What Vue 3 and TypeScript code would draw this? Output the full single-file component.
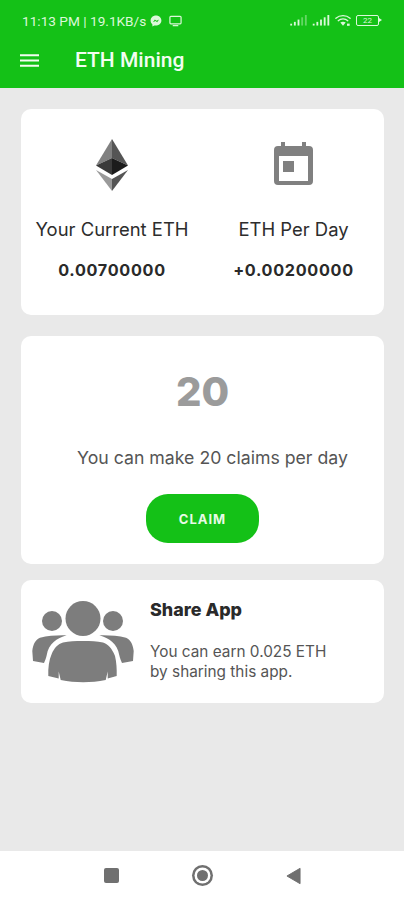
<script setup lang="ts">
interface Stat { label: string; value: string; icon: 'eth' | 'calendar' }
const stats: Stat[] = [
  { label: 'Your Current ETH', value: '0.00700000', icon: 'eth' },
  { label: 'ETH Per Day', value: '+0.00200000', icon: 'calendar' },
]
</script>

<template>
  <div class="screen">
    <header class="header">
      <div class="status">
        <div class="status-left">
          <span>11:13 PM | 19.1KB/s</span>
          <svg class="ico-msg" viewBox="0 0 12 12" width="12" height="12">
            <path fill="#dcf8da" d="M6 .5C2.900.5.600 2.700.600 5.600c0 1.600.700 2.900 1.800 3.800v2l1.900-1c.5.100 1.100.200 1.700.200 3.100 0 5.400-2.200 5.400-5S9.100.5 6 .5z" />
            <path fill="#14c117" d="M2.900 7.300l2-2.800 1.500 1.300 2.700-1.300-2 2.800-1.500-1.300z" />
          </svg>
          <svg class="ico-screen" viewBox="0 0 14 12" width="13" height="12">
            <rect x="1" y="1" width="12" height="8" rx="1" fill="none" stroke="#dcf8da" stroke-width="1.300" />
            <path d="M4 11h6" stroke="#dcf8da" stroke-width="1.300" />
          </svg>
        </div>
        <div class="status-right">
          <svg viewBox="0 0 18 12" width="17" height="11">
            <g fill="#dcf8da">
              <rect x="0" y="9.500" width="2" height="2" />
              <rect x="4" y="7.500" width="2" height="4" />
              <rect x="8" y="5" width="2" height="6.500" />
            </g>
            <g fill="#dcf8da" opacity=".4">
              <rect x="12" y="2.500" width="2" height="9" />
              <rect x="16" y="0" width="2" height="11.500" />
            </g>
          </svg>
          <svg viewBox="0 0 18 12" width="18" height="11">
            <g fill="#dcf8da">
              <rect x="0" y="9.500" width="2" height="2" />
              <rect x="4" y="7.500" width="2" height="4" />
              <rect x="8" y="5" width="2" height="6.500" />
              <rect x="12" y="2.500" width="2" height="9" />
              <rect x="16" y="0" width="2" height="11.500" />
            </g>
          </svg>
          <svg viewBox="0 0 18 14" width="16" height="13">
            <g fill="none" stroke="#dcf8da" stroke-width="1.500" stroke-linecap="round">
              <path d="M1 4.500c4.500-4 11.500-4 16 0" />
              <path d="M3.600 7.200c3-2.600 7.800-2.600 10.800 0" />
            </g>
            <path fill="#dcf8da" d="M6 9.300c1.800-1.300 4.200-1.300 6 0l-3 3.500z" />
            <rect x="13.500" y="10.500" width="3" height="2.500" fill="#dcf8da" />
          </svg>
          <span class="battery"><span>22</span></span>
        </div>
      </div>
      <div class="toolbar">
        <svg class="menu" viewBox="0 0 20 13" width="19" height="13">
          <path d="M0 1h20M0 6.500h20M0 12h20" stroke="#f2fdf1" stroke-width="2" />
        </svg>
        <h1 class="title">ETH Mining</h1>
      </div>
    </header>

    <main class="content">
      <section class="card stats">
        <div v-for="s in stats" :key="s.label" class="stat">
          <div class="stat-icon">
            <svg v-if="s.icon === 'eth'" viewBox="0 0 32 52" width="32" height="52">
              <path fill="#808080" d="M16 0 0 26.500 16 19z" />
              <path fill="#555" d="M16 0 32 26.500 16 19z" />
              <path fill="#3a3a3a" d="M0 26.500 16 19v17z" />
              <path fill="#1c1c1c" d="M32 26.500 16 19v17z" />
              <path fill="#9a9a9a" d="M0 31 16 40v12z" />
              <path fill="#555" d="M32 31 16 40v12z" />
            </svg>
            <svg v-else class="calendar" viewBox="0 0 39 43" width="39" height="43">
              <path fill="#808080" d="M7 0h4v4h17V0h4v4h3a4 4 0 0 1 4 4v31a4 4 0 0 1-4 4H4a4 4 0 0 1-4-4V8a4 4 0 0 1 4-4h3z" />
              <rect x="5" y="14" width="29" height="25" fill="#fff" />
              <rect x="9" y="19" width="11" height="11" fill="#808080" />
            </svg>
          </div>
          <div class="stat-label">{{ s.label }}</div>
          <div class="stat-value">{{ s.value }}</div>
        </div>
      </section>

      <section class="card claim">
        <div class="claim-count">20</div>
        <p class="claim-text">You can make 20 claims per day</p>
        <button class="claim-btn" type="button">CLAIM</button>
      </section>

      <section class="card share">
        <svg class="people" viewBox="0 0 104 84" width="104" height="84">
          <g fill="#7d7d7d">
            <circle cx="21" cy="21" r="10" />
            <circle cx="82" cy="21" r="10" />
            <path d="M1.300 51C2 44 5 39 9 37.700c8-2 18-2.700 26.700-2.400-10 3-18 8-20 20-.7 3-1.700 5.700-2.700 7.700L2 61z" />
            <path d="M102.700 51c-.7-7-3.700-12-7.700-13.300-8-2-18-2.700-26.700-2.400 10 3 18 8 20 20 .7 3 1.700 5.700 2.700 7.700l11-2z" />
            <circle cx="52" cy="18.500" r="17.500" />
            <path d="M17.300 76c-.3-8 .7-16 3.400-22 2.500-6 6.300-10 11.300-11.500 6-1.500 12-1.500 20-1.500s14 0 20 1.500c5 1.500 9 6 12 13.500 1.500 6 1.900 13 1.700 20l-9 2.500v-7l-2 8.500c-15 3-30 3-45 0l-2-8.500v7z" />
          </g>
        </svg>
        <div class="share-body">
          <h2 class="share-title">Share App</h2>
          <p class="share-text">You can earn 0.025 ETH<br />by sharing this app.</p>
        </div>
      </section>
    </main>

    <nav class="nav">
      <span class="nav-square"></span>
      <span class="nav-circle"></span>
      <svg viewBox="0 0 16 18" width="15" height="18">
        <path d="M15 .8v16.400L1 9z" fill="#707070" stroke="#707070" stroke-linejoin="round" />
      </svg>
    </nav>
  </div>
</template>

<style>
html, body { margin: 0; background: #e9e9e9; }
</style>

<style scoped>
.screen {
  width: 404px;
  height: 900px;
  display: flex;
  flex-direction: column;
  background: #e9e9e9;
  font-family: Inter, "Liberation Sans", sans-serif;
  overflow: hidden;
}
.header { height: 88px; background: #14c117; color: #f2fdf1; box-sizing: border-box; }
.status {
  height: 41px;
  padding: 0 22px;
  display: flex;
  align-items: center;
  justify-content: space-between;
  font-family: Roboto, sans-serif;
  font-size: 13.650px;
}
.status-left { display: flex; align-items: center; gap: 4px; color: #dcf8da; }
.ico-screen { margin-left: 3px; }
.status-right { display: flex; align-items: center; gap: 5px; }
.battery {
  width: 21px;
  height: 9px;
  border: 1px solid #dcf8da;
  border-radius: 2px;
  font-size: 8px;
  line-height: 9px;
  text-align: center;
  color: #dcf8da;
  position: relative;
  margin-right: 3px;
}
.battery::after {
  content: "";
  position: absolute;
  right: -4px;
  top: 2px;
  border-left: 3px solid #dcf8da;
  border-top: 2.500px solid transparent;
  border-bottom: 2.500px solid transparent;
}
.toolbar { display: flex; align-items: center; height: 38px; padding-left: 20px; }
.title {
  margin: 0 0 0 36px;
  font-family: Roboto, sans-serif;
  font-size: 21px;
  font-weight: 500;
  line-height: 38px;
}
.content {
  flex: 1;
  padding: 21px 20px 0 21px;
  display: flex;
  flex-direction: column;
}
.card { background: #fff; border-radius: 10px; }
.stats { height: 206px; display: grid; grid-template-columns: 182px 1fr; }
.stat { display: flex; flex-direction: column; align-items: center; padding-top: 30px; }
.stat-icon { height: 52px; display: flex; align-items: center; justify-content: center; }
.calendar { margin-bottom: 3px; }
.stat-label { margin-top: 26px; font-size: 18.450px; line-height: 24px; color: #2d2d2d; white-space: nowrap; }
.stat-value { margin-top: 19px; font-size: 16.200px; font-weight: 700; line-height: 20px; color: #2a2a2a; letter-spacing: .7px; }
.claim {
  margin-top: 21px;
  height: 228px;
  display: flex;
  flex-direction: column;
  align-items: center;
  box-sizing: border-box;
  padding-top: 33px;
}
.claim-count { font-size: 40px; line-height: 46px; font-weight: 800; color: #9b9b9b; }
.claim-text { margin: 31px 0 0 20px; font-size: 17.700px; line-height: 24px; color: #555; white-space: nowrap; }
.claim-btn {
  margin-top: 24px;
  width: 113px;
  height: 49px;
  border: 0;
  border-radius: 22px;
  background: #14c117;
  color: #e8fbe6;
  font-family: Inter, sans-serif;
  font-size: 13px;
  font-weight: 700;
  letter-spacing: 1px;
}
.share {
  margin-top: 16px;
  height: 123px;
  display: flex;
  align-items: center;
  padding-left: 10px;
}
.people { flex: none; }
.share-body { margin-left: 15px; margin-bottom: 2px; }
.share-title { margin: 0; font-size: 17.900px; line-height: 22px; font-weight: 800; color: #2a2a2a; }
.share-text { margin: 21px 0 0; font-size: 15.350px; line-height: 20px; color: #555; }
.nav {
  height: 49px;
  background: #fff;
  display: flex;
  align-items: center;
  justify-content: center;
  gap: 78px;
  padding-left: 1px;
}
.nav-square { width: 15px; height: 15px; border-radius: 2px; background: #707070; }
.nav-circle {
  width: 11px;
  height: 11px;
  border-radius: 50%;
  background: #707070;
  box-shadow: 0 0 0 2.500px #fff, 0 0 0 5px #707070;
}
</style>
